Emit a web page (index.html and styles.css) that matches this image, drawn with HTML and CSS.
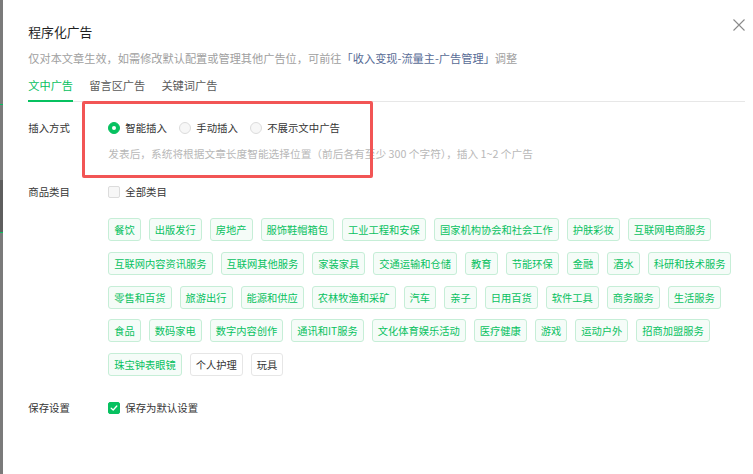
FILE: index.html
```html
<!DOCTYPE html>
<html lang="zh-CN">
<head>
<meta charset="utf-8">
<title>程序化广告</title>
<link rel="stylesheet" href="styles.css">
</head>
<body>
<div class="page">
  <div class="backdrop"></div>
  <div class="dialog">
    <div class="header">
      <h1 class="title">程序化广告</h1>
      <button class="close" aria-label="关闭">
        <svg width="12" height="12" viewBox="0 0 12 12"><path d="M0.5 0.5L11.5 11.5M11.5 0.5L0.5 11.5" stroke="#8a8a8a" stroke-width="1.1" fill="none"/></svg>
      </button>
    </div>
    <p class="subtitle">仅对本文章生效，如需修改默认配置或管理其他广告位，可前往<span class="link">「收入变现-流量主-广告管理」</span>调整</p>
    <div class="tabs">
      <span class="tab active">文中广告</span>
      <span class="tab">留言区广告</span>
      <span class="tab">关键词广告</span>
    </div>
    <div class="form">
      <div class="row row-insert">
        <div class="label">插入方式</div>
        <div class="field">
          <div class="radios">
            <label class="radio"><span class="dot checked"></span>智能插入</label>
            <label class="radio"><span class="dot"></span>手动插入</label>
            <label class="radio"><span class="dot"></span>不展示文中广告</label>
          </div>
          <div class="hint">发表后，系统将根据文章长度智能选择位置（前后各有至少 300 个字符），插入 1~2 个广告</div>
        </div>
      </div>
      <div class="row row-cat">
        <div class="label">商品类目</div>
        <div class="field">
          <label class="check"><span class="box"></span>全部类目</label>
          <div class="tags">
            <span class="tag">餐饮</span>
            <span class="tag">出版发行</span>
            <span class="tag">房地产</span>
            <span class="tag">服饰鞋帽箱包</span>
            <span class="tag">工业工程和安保</span>
            <span class="tag">国家机构协会和社会工作</span>
            <span class="tag">护肤彩妆</span>
            <span class="tag">互联网电商服务</span>
            <span class="tag">互联网内容资讯服务</span>
            <span class="tag">互联网其他服务</span>
            <span class="tag">家装家具</span>
            <span class="tag">交通运输和仓储</span>
            <span class="tag">教育</span>
            <span class="tag">节能环保</span>
            <span class="tag">金融</span>
            <span class="tag">酒水</span>
            <span class="tag">科研和技术服务</span>
            <span class="tag">零售和百货</span>
            <span class="tag">旅游出行</span>
            <span class="tag">能源和供应</span>
            <span class="tag">农林牧渔和采矿</span>
            <span class="tag">汽车</span>
            <span class="tag">亲子</span>
            <span class="tag">日用百货</span>
            <span class="tag">软件工具</span>
            <span class="tag">商务服务</span>
            <span class="tag">生活服务</span>
            <span class="tag">食品</span>
            <span class="tag">数码家电</span>
            <span class="tag">数字内容创作</span>
            <span class="tag">通讯和IT服务</span>
            <span class="tag">文化体育娱乐活动</span>
            <span class="tag">医疗健康</span>
            <span class="tag">游戏</span>
            <span class="tag">运动户外</span>
            <span class="tag">招商加盟服务</span>
            <span class="tag">珠宝钟表眼镜</span>
            <span class="tag off">个人护理</span>
            <span class="tag off">玩具</span>
          </div>
        </div>
      </div>
      <div class="row row-save">
        <div class="label">保存设置</div>
        <div class="field">
          <label class="check"><span class="box checked"><svg width="8" height="8" viewBox="0 0 8 8"><path d="M1.2 4.2L3.2 6L6.8 2" stroke="#fff" stroke-width="1.3" fill="none" stroke-linecap="round" stroke-linejoin="round"/></svg></span>保存为默认设置</label>
        </div>
      </div>
    </div>
    <div class="annotation"></div>
  </div>
</div>
</body>
</html>
```
FILE: styles.css
```css
* { box-sizing: border-box; }
html, body {
  margin: 0;
  padding: 0;
  width: 753px;
  height: 474px;
  overflow: hidden;
  background: #fff;
  font-family: "Noto Sans CJK SC", "Noto Sans", "Liberation Sans", sans-serif;
  color: #353535;
}
.page {
  display: flex;
  height: 474px;
}
.backdrop {
  width: 3px;
  flex: none;
  background: linear-gradient(to bottom,
    #7a7a7a 0, #7a7a7a 103.5px, #07c160 103.5px, #07c160 104.5px,
    #7a7a7a 104.5px, #7a7a7a 180px, #5e5e5e 180px, #5e5e5e 232px,
    #07c160 232px, #07c160 233px, #7a7a7a 233px);
}
.dialog {
  position: relative;
  flex: 1;
  padding: 22px 8px 0 25.3px;
}
.header {
  display: flex;
  justify-content: space-between;
  align-items: flex-start;
}
.title {
  margin: 0;
  font-size: 12.8px;
  line-height: 19px;
  font-weight: normal;
  color: #1f1f1f;
}
.close {
  border: 0;
  padding: 0;
  margin: -3px 0 0 0;
  background: none;
  width: 12px;
  height: 12px;
  display: flex;
}
.subtitle {
  margin: 9px 0 0 0;
  font-size: 11.2px;
  line-height: 16px;
  color: #a0a0a0;
  white-space: nowrap;
}
.link { color: #576b95; }
.tabs {
  margin-top: 10.5px;
  display: flex;
  gap: 16.2px;
  border-bottom: 1px solid #e7e7e7;
}
.tab {
  font-size: 11.2px;
  line-height: 16px;
  padding-bottom: 7.5px;
  border-bottom: 2px solid transparent;
  margin-bottom: -1px;
  color: #5a5a5a;
}
.tab.active {
  color: #07c160;
  border-bottom-color: #07c160;
}
.form {
  padding-top: 18px;
}
.row {
  display: grid;
  grid-template-columns: 80px 1fr;
}
.label {
  font-size: 10.4px;
  line-height: 16px;
  color: #353535;
}
.field {
  display: flex;
  flex-direction: column;
  align-items: flex-start;
}
.radios {
  display: flex;
  gap: 12.4px;
}
.radio, .check {
  display: flex;
  align-items: center;
  gap: 5px;
  font-size: 10.4px;
  line-height: 16px;
  color: #353535;
}
.dot {
  width: 12px;
  height: 12px;
  border-radius: 50%;
  border: 1px solid #dcdcdc;
  background: #f7f7f7;
  position: relative;
}
.dot.checked {
  background: #07c160;
  border-color: #07c160;
}
.dot.checked::after {
  content: "";
  position: absolute;
  left: 3px;
  top: 3px;
  width: 4px;
  height: 4px;
  border-radius: 50%;
  background: #fff;
}
.hint {
  margin-top: 10px;
  font-size: 10.7px;
  line-height: 16px;
  color: #b8b8b8;
  white-space: nowrap;
}
.row-cat { margin-top: 22px; }
.box {
  width: 12px;
  height: 12px;
  border-radius: 2px;
  border: 1px solid #dcdcdc;
  background: #f7f7f7;
  display: flex;
  align-items: center;
  justify-content: center;
}
.box.checked {
  background: #07c160;
  border-color: #07c160;
}
.tags {
  margin-top: 18px;
  display: flex;
  flex-wrap: wrap;
  gap: 10.75px 8px;
}
.tag {
  height: 23px;
  display: inline-flex;
  align-items: center;
  padding: 0 5px;
  border: 1px solid #c6eed7;
  background: #f5fcf8;
  border-radius: 3px;
  font-size: 10.25px;
  color: #07c160;
  white-space: nowrap;
}
.tag.off {
  border-color: #e6e6e6;
  background: #fff;
  color: #353535;
}
.row-save { margin-top: 24px; }
.annotation {
  position: absolute;
  left: 78.7px;
  top: 101px;
  width: 291px;
  height: 77px;
  border: 3px solid #f25555;
  border-radius: 2px;
  pointer-events: none;
}
```
